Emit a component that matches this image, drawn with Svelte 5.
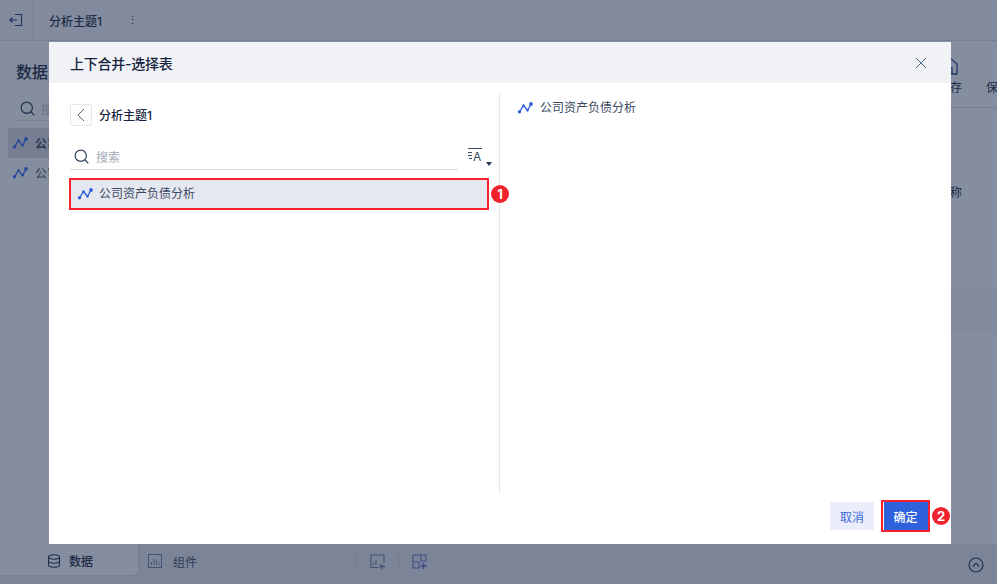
<script lang="ts">
    const tables = ['公司资产负债分析', '公司资产负债分析'];
</script>

{#snippet trend(color: string)}
    <svg class="trend" viewBox="0 0 16 12" width="16" height="12" fill="none" stroke={color} stroke-width="1.4">
        <path d="M2.500 10L6.500 3.500l4 5L14 2"/>
        <circle cx="2.500" cy="9.800" r="1.700" fill={color} stroke="none"/>
        <circle cx="6.500" cy="3.500" r="1.200" fill={color} stroke="none"/>
        <circle cx="10.500" cy="8.300" r="1.200" fill={color} stroke="none"/>
        <circle cx="14" cy="2" r="1.900" fill={color} stroke="none"/>
    </svg>
{/snippet}

{#snippet lens(size: number, color: string)}
    <svg viewBox="0 0 16 16" width={size} height={size} fill="none" stroke={color} stroke-width="1.300">
        <circle cx="7.200" cy="7.200" r="6"/>
        <path d="M11.500 11.500l3.800 3.800"/>
    </svg>
{/snippet}

<div class="page">
    <header class="topbar">
        <div class="exit">
            <svg viewBox="0 0 14 14" width="14" height="14" fill="none" stroke="#1f3560" stroke-width="1.100">
                <path d="M6 1.500h6.500v11H6M1 7h7M3.500 4.500L1 7l2.500 2.500"/>
            </svg>
        </div>
        <span class="subject">分析主题1</span>
        <span class="dots">⋮</span>
    </header>

    <div class="body">
        <aside class="side">
            <h2>数据</h2>
            <div class="side-search">
                {@render lens(15, '#24324f')}
                <span>搜索</span>
            </div>
            {#each tables as t, i}
                <div class="side-row" class:active={i === 0}>
                    {@render trend('#2a4a9c')}
                    <span>{t}</span>
                </div>
            {/each}
        </aside>

        <main class="canvas">
            <div class="tools">
                <div class="tool">
                    <svg viewBox="0 0 16 18" width="16" height="18" fill="none" stroke="#22386a" stroke-width="1.300">
                        <path d="M1 17V7l7-6 7 6v10zM6 17v-6h4v6"/>
                    </svg>
                    <span>另存</span>
                </div>
                <div class="tool"><span class="spacer"></span><span>保存</span></div>
            </div>
            <div class="name-row"><span>名称</span></div>
            <div class="band"></div>
        </main>
    </div>

    <footer class="bottombar">
        <div class="tab-data">
            <svg viewBox="0 0 14 14" width="14" height="14" fill="none" stroke="#1c2c4c" stroke-width="1.100">
                <ellipse cx="7" cy="3" rx="5.500" ry="2.200"/>
                <path d="M1.500 3v8c0 1.200 2.500 2.200 5.500 2.200s5.500-1 5.500-2.200V3M1.500 7c0 1.200 2.500 2.200 5.500 2.200s5.500-1 5.500-2.200"/>
            </svg>
            <span>数据</span>
        </div>
        <div class="tab-comp">
            <svg viewBox="0 0 14 14" width="14" height="14" fill="none" stroke="#3f5573" stroke-width="1">
                <rect x="0.500" y="0.500" width="13" height="13"/>
                <path d="M3.500 11V8M6 11V5M8.500 11V6.500M11 11V8.500"/>
            </svg>
            <span>组件</span>
        </div>
        <span class="sep"></span>
        <svg class="add" viewBox="0 0 15 15" width="15" height="15" fill="none" stroke="#3f5573" stroke-width="1.100">
            <path d="M8 13.500H1V1h13v8M3.500 11V8.500M6 11V6"/>
            <path d="M11.500 10v5M9 12.500h6" stroke-width="1.600"/>
        </svg>
        <span class="sep small"></span>
        <svg class="add" viewBox="0 0 15 15" width="15" height="15" fill="none" stroke="#3d4d85" stroke-width="1.100">
            <path d="M9 1h5v6H9zM1 1h8v6M1 1v13h6V8H1"/>
            <path d="M11.500 9v6M8.500 12h6.500" stroke-width="1.600"/>
        </svg>
        <svg class="collapse" viewBox="0 0 16 16" width="16" height="16" fill="none" stroke="#1e2d4d" stroke-width="1.100">
            <circle cx="8" cy="8" r="7"/>
            <path d="M4.800 9.500L8 6.200l3.200 3.300"/>
        </svg>
    </footer>

    <div class="modal">
        <div class="modal-head">
            <span>上下合并-选择表</span>
            <svg viewBox="0 0 12 12" width="12" height="12" fill="none" stroke="#4a6f8c" stroke-width="1">
                <path d="M1 1l10 10M11 1L1 11"/>
            </svg>
        </div>
        <div class="modal-body">
            <section class="left">
                <div class="crumb">
                    <button class="back" aria-label="返回">
                        <svg viewBox="0 0 8 14" width="8" height="14" fill="none" stroke="#5a6578" stroke-width="1">
                            <path d="M7 1L1 7l6 6"/>
                        </svg>
                    </button>
                    <strong>分析主题1</strong>
                </div>
                <div class="search-row">
                    <div class="search">
                        {@render lens(15, '#33435f')}
                        <span>搜索</span>
                    </div>
                    <div class="sort">
                        <svg viewBox="0 0 14 12" width="14" height="12" fill="none" stroke="#3a4a64" stroke-width="1">
                            <path d="M0 0.500h14M0 4.500h4M0 7.500h4M1 10.500h3"/>
                        </svg>
                        <span class="sort-a">A</span>
                        <span class="caret"></span>
                    </div>
                </div>
                <div class="row-wrap">
                    <div class="row">
                        {@render trend('#3260d8')}
                        <span>公司资产负债分析</span>
                    </div>
                    <span class="badge">1</span>
                </div>
            </section>
            <section class="right">
                <div class="picked">
                    {@render trend('#3260d8')}
                    <span>公司资产负债分析</span>
                </div>
            </section>
        </div>
        <div class="modal-foot">
            <button class="cancel">取消</button>
            <div class="ok-wrap">
                <button class="ok">确定</button>
                <span class="badge">2</span>
            </div>
        </div>
    </div>
</div>

<style>
    :global(body) {
        margin: 0;
    }

    .page {
        position: relative;
        width: 997px;
        height: 584px;
        overflow: hidden;
        display: flex;
        flex-direction: column;
        background: #858e9f;
        color: #1c2a45;
        font-family: Inter, "Noto Sans CJK SC", sans-serif;
        font-size: 12px;
    }

    .topbar {
        height: 40px;
        flex-shrink: 0;
        display: flex;
        align-items: center;
        background: #828b9d;
        border-bottom: 1px solid #768095;
    }

    .exit {
        width: 32px;
        height: 40px;
        display: flex;
        align-items: center;
        justify-content: center;
        border-right: 1px solid #7a8397;
    }

    .subject {
        margin-left: 16px;
        font-weight: 500;
    }

    .dots {
        margin-left: 25px;
        font-size: 11px;
    }

    .body {
        flex: 1;
        display: flex;
        min-height: 0;
    }

    .side {
        width: 130px;
        padding: 0 0 0 8px;
        box-sizing: border-box;
    }

    .side h2 {
        margin: 19px 0 12px 8px;
        font-size: 16px;
        line-height: 24px;
        font-weight: 500;
    }

    .side-search {
        display: flex;
        align-items: center;
        gap: 6px;
        height: 24px;
        margin: 0 0 7px 8px;
        padding-left: 4px;
        border-bottom: 1px solid #768095;
        color: #687286;
        white-space: nowrap;
    }

    .side-row {
        height: 30px;
        display: flex;
        align-items: center;
        gap: 7px;
        padding-left: 4px;
        white-space: nowrap;
        color: #2c3a55;
    }

    .side-row span {
        margin-top: -2px;
    }

    .side-row.active {
        background: #767f92;
        font-weight: 700;
    }

    .canvas {
        flex: 1;
        display: flex;
        flex-direction: column;
    }

    .tools {
        height: 66px;
        display: flex;
        justify-content: flex-end;
        gap: 24px;
        overflow: hidden;
        border-bottom: 1px solid #778195;
    }

    .tool {
        flex-shrink: 0;
        display: flex;
        flex-direction: column;
        align-items: center;
        padding-top: 16px;
        gap: 6px;
        line-height: 14px;
    }

    .tool:last-child {
        margin-right: -13px;
    }

    .spacer {
        height: 18px;
    }

    .name-row {
        display: flex;
        justify-content: flex-end;
        padding: 77px 35px 0 0;
        line-height: 16px;
    }

    .band {
        height: 44px;
        margin-top: 88px;
        background: #828b9d;
    }

    .bottombar {
        height: 40px;
        flex-shrink: 0;
        display: flex;
        align-items: center;
        background: #7c8598;
    }

    .tab-data {
        width: 139px;
        height: 32px;
        align-self: flex-start;
        display: flex;
        align-items: center;
        gap: 8px;
        padding: 2px 0 0 47px;
        box-sizing: border-box;
        background: #858e9f;
        border-radius: 0 0 6px 0;
        border-right: 1px solid #768095;
        border-bottom: 1px solid #768095;
        font-weight: 500;
    }

    .tab-comp {
        display: flex;
        align-items: center;
        gap: 11px;
        margin-left: 9px;
        margin-top: -6px;
        color: #2c3a55;
    }

    .sep {
        width: 1px;
        height: 13px;
        margin: -6px 13px 0 159px;
        background: #707a8e;
    }

    .sep.small {
        margin-left: 13px;
    }

    .add {
        margin-top: -6px;
    }

    .collapse {
        margin-left: auto;
        margin-right: 13px;
        margin-top: 2px;
    }

    .modal {
        position: absolute;
        left: 49px;
        top: 42px;
        width: 902px;
        height: 502px;
        display: flex;
        flex-direction: column;
        background: #fff;
    }

    .modal-head {
        height: 41px;
        flex-shrink: 0;
        display: flex;
        align-items: center;
        justify-content: space-between;
        padding: 0 24px 0 21px;
        background: #f1f2f6;
        font-size: 14px;
        letter-spacing: -0.25px;
        font-weight: 500;
        color: #16233f;
    }

    .modal-body {
        height: 400px;
        margin-top: 11px;
        display: flex;
    }

    .left {
        width: 451px;
        box-sizing: border-box;
        padding: 10px 0 0 20px;
        border-right: 1px solid #e3e5ea;
    }

    .crumb {
        display: flex;
        align-items: center;
        gap: 7px;
        padding-left: 1px;
    }

    .crumb strong {
        font-weight: 500;
        color: #16233f;
        margin-top: -2px;
    }

    .back {
        width: 22px;
        height: 22px;
        padding: 0;
        display: flex;
        align-items: center;
        justify-content: center;
        background: #fff;
        border: 1px solid #e4e6eb;
        border-radius: 2px;
    }

    .search-row {
        display: flex;
        align-items: center;
        margin: 18px 0 0 1px;
    }

    .search {
        width: 388px;
        height: 26px;
        box-sizing: border-box;
        display: flex;
        align-items: center;
        gap: 7px;
        padding-left: 4px;
        border-bottom: 1px solid #dcdfe5;
        color: #a4abb8;
    }

    .sort {
        position: relative;
        margin-left: 10px;
        width: 26px;
        height: 20px;
    }

    .sort svg {
        position: absolute;
        left: 0;
        top: 1px;
    }

    .sort-a {
        position: absolute;
        left: 5px;
        top: 2px;
        font-size: 12px;
        line-height: 16px;
        color: #3a4a64;
    }

    .caret {
        position: absolute;
        left: 18px;
        top: 15px;
        border: 3.500px solid transparent;
        border-top: 4px solid #2a3850;
        border-bottom: 0;
    }

    .row-wrap {
        display: flex;
        align-items: center;
        margin-top: 8px;
    }

    .row {
        width: 420px;
        height: 32px;
        flex-shrink: 0;
        box-sizing: border-box;
        display: flex;
        align-items: center;
        gap: 6px;
        padding-left: 6px;
        background: #e5e8f0;
        border: 2px solid #f5222d;
        color: #3c4a62;
    }

    .row span {
        margin-top: -3px;
    }

    .badge {
        position: relative;
        width: 18px;
        height: 18px;
        border-radius: 50%;
        margin-left: 2px;
        flex-shrink: 0;
        display: flex;
        align-items: center;
        justify-content: center;
        background: #f0222d;
        color: #fff;
        font-size: 13px;
        font-weight: 700;
    }

    .right {
        flex: 1;
        padding: 5px 0 0 17px;
    }

    .picked {
        display: flex;
        align-items: center;
        gap: 7px;
        height: 18px;
        color: #3c4a62;
    }

    .picked span {
        margin-top: -3px;
    }

    .modal-foot {
        flex: 1;
        display: flex;
        justify-content: flex-end;
        align-items: flex-start;
        padding: 6px 1px 0 0;
        gap: 7px;
    }

    button {
        font: inherit;
    }

    .cancel {
        width: 44px;
        height: 28px;
        margin-top: 2px;
        padding: 0;
        border: 0;
        border-radius: 2px;
        background: #e9eefa;
        color: #3d68d8;
    }

    .ok-wrap {
        display: flex;
        align-items: center;
    }

    .ok {
        width: 49px;
        height: 32px;
        padding: 0;
        box-sizing: border-box;
        background: #2e62dc;
        border: 2px solid #f5222d;
        box-shadow: inset 1px 0 0 #fff;
        color: #fff;
        font-weight: 500;
    }

    .trend {
        flex-shrink: 0;
    }
</style>
